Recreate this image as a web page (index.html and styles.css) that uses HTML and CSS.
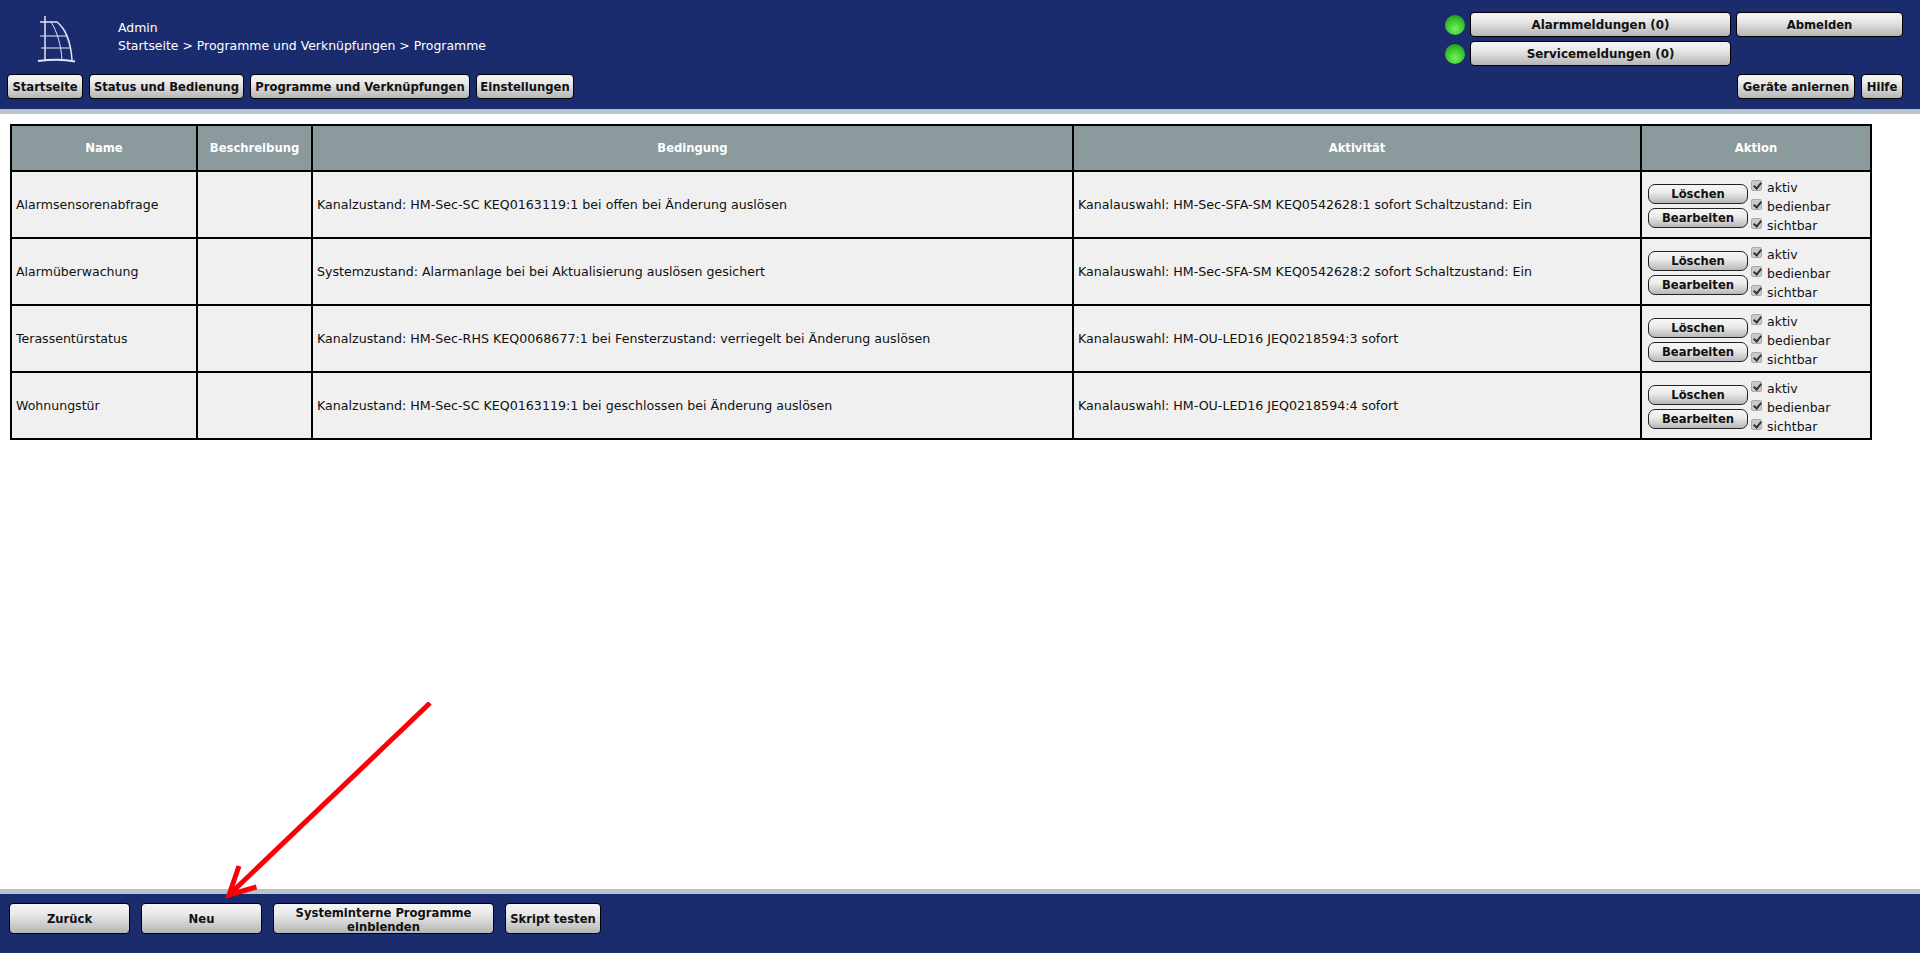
FILE: index.html
```html
<!DOCTYPE html>
<html lang="de">
<head>
<meta charset="utf-8">
<title>Programme</title>
<link rel="stylesheet" href="styles.css">
</head>
<body>
<header class="hdr">
  <div class="hdr-top">
    <svg class="logo" width="60" height="56" viewBox="0 0 60 56" fill="none" stroke="#dfe6f4">
      <path d="M14 1V46" stroke-width="1.500"/>
      <path d="M7 46C20 44.500 34 44.500 44 46.500" stroke-width="2"/>
      <path d="M9 7H26C35 14 40 29 41 45" stroke-width="1.500"/>
      <path d="M20 7C26 16 30 30 31 45" stroke-width="1"/>
      <path d="M9 21H36M10 33H39" stroke-width="1.200"/>
    </svg>
    <div class="crumbs">
      <div>Admin</div>
      <div>Startseite &gt; Programme und Verknüpfungen &gt; Programme</div>
    </div>
    <div class="alarms">
      <div class="alarm-row">
        <span class="led"></span>
        <button class="btn wide">Alarmmeldungen (0)</button>
        <button class="btn logout">Abmelden</button>
      </div>
      <div class="alarm-row">
        <span class="led"></span>
        <button class="btn wide">Servicemeldungen (0)</button>
      </div>
    </div>
  </div>
  <nav class="hdr-nav">
    <div class="nav-group">
      <button class="btn nav n1">Startseite</button>
      <button class="btn nav n2">Status und Bedienung</button>
      <button class="btn nav n3">Programme und Verknüpfungen</button>
      <button class="btn nav n4">Einstellungen</button>
    </div>
    <div class="nav-group">
      <button class="btn nav n5">Geräte anlernen</button>
      <button class="btn nav n6">Hilfe</button>
    </div>
  </nav>
</header>
<div class="band"></div>
<main class="content">
  <table class="grid">
    <colgroup>
      <col class="c1"><col class="c2"><col class="c3"><col class="c4"><col class="c5">
    </colgroup>
    <thead>
      <tr><th>Name</th><th>Beschreibung</th><th>Bedingung</th><th>Aktivität</th><th>Aktion</th></tr>
    </thead>
    <tbody>
      <tr>
        <td class="nm">Alarmsensorenabfrage</td><td></td>
        <td>Kanalzustand: HM-Sec-SC KEQ0163119:1 bei offen bei Änderung auslösen</td>
        <td>Kanalauswahl: HM-Sec-SFA-SM KEQ0542628:1 sofort Schaltzustand: Ein</td>
        <td class="act"><div class="act-in">
          <div class="act-btns"><button class="btn small">Löschen</button><button class="btn small">Bearbeiten</button></div>
          <div class="act-checks">
            <label><input type="checkbox" class="cb" checked disabled>aktiv</label>
            <label><input type="checkbox" class="cb" checked disabled>bedienbar</label>
            <label><input type="checkbox" class="cb" checked disabled>sichtbar</label>
          </div>
        </div></td>
      </tr>
      <tr>
        <td class="nm">Alarmüberwachung</td><td></td>
        <td class="sys">Systemzustand: Alarmanlage bei bei Aktualisierung auslösen gesichert</td>
        <td>Kanalauswahl: HM-Sec-SFA-SM KEQ0542628:2 sofort Schaltzustand: Ein</td>
        <td class="act"><div class="act-in">
          <div class="act-btns"><button class="btn small">Löschen</button><button class="btn small">Bearbeiten</button></div>
          <div class="act-checks">
            <label><input type="checkbox" class="cb" checked disabled>aktiv</label>
            <label><input type="checkbox" class="cb" checked disabled>bedienbar</label>
            <label><input type="checkbox" class="cb" checked disabled>sichtbar</label>
          </div>
        </div></td>
      </tr>
      <tr>
        <td class="nm">Terassentürstatus</td><td></td>
        <td>Kanalzustand: HM-Sec-RHS KEQ0068677:1 bei Fensterzustand: verriegelt bei Änderung auslösen</td>
        <td>Kanalauswahl: HM-OU-LED16 JEQ0218594:3 sofort</td>
        <td class="act"><div class="act-in">
          <div class="act-btns"><button class="btn small">Löschen</button><button class="btn small">Bearbeiten</button></div>
          <div class="act-checks">
            <label><input type="checkbox" class="cb" checked disabled>aktiv</label>
            <label><input type="checkbox" class="cb" checked disabled>bedienbar</label>
            <label><input type="checkbox" class="cb" checked disabled>sichtbar</label>
          </div>
        </div></td>
      </tr>
      <tr>
        <td class="nm">Wohnungstür</td><td></td>
        <td>Kanalzustand: HM-Sec-SC KEQ0163119:1 bei geschlossen bei Änderung auslösen</td>
        <td>Kanalauswahl: HM-OU-LED16 JEQ0218594:4 sofort</td>
        <td class="act"><div class="act-in">
          <div class="act-btns"><button class="btn small">Löschen</button><button class="btn small">Bearbeiten</button></div>
          <div class="act-checks">
            <label><input type="checkbox" class="cb" checked disabled>aktiv</label>
            <label><input type="checkbox" class="cb" checked disabled>bedienbar</label>
            <label><input type="checkbox" class="cb" checked disabled>sichtbar</label>
          </div>
        </div></td>
      </tr>
    </tbody>
  </table>
</main>
<div class="band"></div>
<footer class="ftr">
  <button class="btn foot f1">Zurück</button>
  <button class="btn foot f1">Neu</button>
  <button class="btn foot f2">Systeminterne Programme einblenden</button>
  <button class="btn foot f3">Skript testen</button>
</footer>
<svg class="arrow" width="220" height="205" viewBox="0 0 220 205" fill="none" stroke="#fb0007" stroke-width="5">
  <path d="M209 1L10 191"/>
  <path d="M18 164L8 193L35.500 185"/>
</svg>
</body>
</html>
```
FILE: styles.css
```css
* { box-sizing: border-box; }
html, body { height: 100%; }
body {
  margin: 0;
  display: flex;
  flex-direction: column;
  height: 953px;
  overflow: hidden;
  background: #fff;
  color: #111;
  font-family: "DejaVu Sans", Verdana, sans-serif;
  font-size: 12px;
}
.hdr { height: 109px; background: #1a2c6e; color: #fff; padding: 12px 17px 0 7px; flex: none; }
.hdr-top { display: flex; height: 62px; }
.logo { margin: 3px 0 0 24px; flex: none; }
.crumbs { margin-left: 27px; padding-top: 7px; line-height: 18px; font-size: 12.450px; flex: 1; }
.alarms { display: flex; flex-direction: column; gap: 4px; }
.alarm-row { display: flex; align-items: center; gap: 5px; height: 25px; }
.led {
  width: 20px; height: 20px; border-radius: 50%;
  background: radial-gradient(circle at 50% 70%, #7dea5e 0, #3fce2f 45%, #1f9a22 85%, #1b7e2a 100%);
}
.btn {
  font-family: inherit;
  font-weight: bold;
  font-size: 11.600px;
  color: #111;
  padding: 0;
  border: 1px solid #000;
  border-radius: 4px;
  background: linear-gradient(#f4f4f4, #e9e9e9 35%, #b5b5b5);
}
.wide { width: 261px; height: 25px; font-size: 11.900px; }
.logout { width: 167px; height: 25px; }
.hdr-nav { display: flex; justify-content: space-between; }
.nav-group { display: flex; gap: 6px; }
.nav { height: 25px; }
.n1 { width: 76px; }
.n2 { width: 155px; }
.n3 { width: 220px; }
.n4 { width: 98px; }
.n5 { width: 118px; }
.n6 { width: 42px; }
.band { height: 5px; flex: none; background: #b8c4cb; }
.content { flex: 1; padding: 10px 0 0 10px; }
.grid { border-collapse: collapse; table-layout: fixed; width: 1860px; }
.c1 { width: 186px; }
.c2 { width: 115px; }
.c3 { width: 761px; }
.c4 { width: 568px; }
.c5 { width: 230px; }
.grid th, .grid td { border: 2px solid #000; }
.grid th { height: 46px; background: #8a9a9d; color: #fff; font-size: 11.600px; font-weight: bold; padding: 0; }
.grid td { height: 67px; background: #f0f0f0; padding: 0 0 0 4px; font-size: 12.650px; }
.grid td.nm { font-size: 12.560px; }
.grid td.sys { font-size: 12.600px; }
.grid td.act { padding: 0 0 0 6px; font-size: 12.500px; }
.act-in { display: flex; gap: 3px; align-items: flex-start; }
.act-btns { display: flex; flex-direction: column; gap: 4px; padding-top: 10px; }
.small { width: 100px; height: 20px; border-color: #222; border-radius: 7px; background: linear-gradient(#f7f7f7, #ececec 40%, #b8b8b8); }
.act-checks { display: flex; flex-direction: column; padding-top: 4px; }
.act-checks label { display: flex; align-items: center; height: 19px; }
.cb {
  appearance: none;
  position: relative;
  width: 11px; height: 11px;
  margin: -4px 5px 0 0;
  flex: none;
  border: 1px solid #aaa;
  border-radius: 2px;
  background: #cacaca;
}
.cb::after {
  content: "";
  position: absolute;
  left: 3px; top: 0;
  width: 3px; height: 6px;
  border: solid #333;
  border-width: 0 2px 2px 0;
  transform: rotate(40deg);
}
.ftr { flex: none; height: 59px; background: #1a2c6e; display: flex; gap: 11px; padding: 9px 0 0 9px; align-items: flex-start; }
.foot { height: 31px; line-height: 14px; }
.f1 { width: 121px; }
.f2 { width: 221px; padding-top: 2px; }
.f3 { width: 96px; }
.arrow { position: absolute; left: 221px; top: 702px; }
```
